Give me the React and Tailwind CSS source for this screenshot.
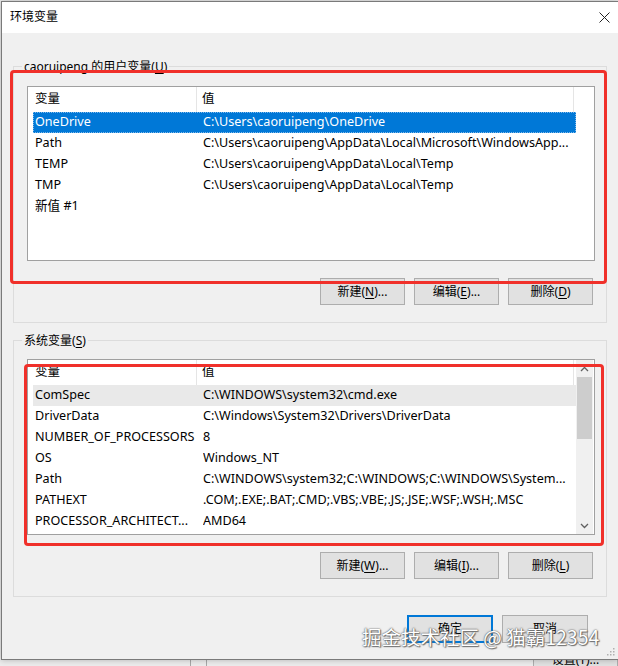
import React from 'react';

const userRows = [
  ['OneDrive', 'C:\\Users\\caoruipeng\\OneDrive'],
  ['Path', 'C:\\Users\\caoruipeng\\AppData\\Local\\Microsoft\\WindowsApp...'],
  ['TEMP', 'C:\\Users\\caoruipeng\\AppData\\Local\\Temp'],
  ['TMP', 'C:\\Users\\caoruipeng\\AppData\\Local\\Temp'],
  ['新值 #1', ''],
];

const sysRows = [
  ['ComSpec', 'C:\\WINDOWS\\system32\\cmd.exe'],
  ['DriverData', 'C:\\Windows\\System32\\Drivers\\DriverData'],
  ['NUMBER_OF_PROCESSORS', '8'],
  ['OS', 'Windows_NT'],
  ['Path', 'C:\\WINDOWS\\system32;C:\\WINDOWS;C:\\WINDOWS\\System...'],
  ['PATHEXT', '.COM;.EXE;.BAT;.CMD;.VBS;.VBE;.JS;.JSE;.WSF;.WSH;.MSC'],
  ['PROCESSOR_ARCHITECT...', 'AMD64'],
];

// 按钮（带助记键下划线）
function Btn({ label, hot, tail = '', primary = false, size = 'h-[27px] w-[85px]' }) {
  return (
    <div
      className={`${size} flex items-center justify-center bg-[#e1e1e1] text-[12px] text-black ${
        primary ? 'border-2 border-[#0078d7]' : 'border border-[#adadad]'
      }`}
    >
      {label}
      {hot && (
        <>
          (<span className="underline underline-offset-[2px]">{hot}</span>)
        </>
      )}
      {tail}
    </div>
  );
}

function Header() {
  return (
    <div className="flex h-[25px] items-center text-[12.5px] bg-white">
      <div className="w-[169px] h-full flex items-center pl-[7px] border-r border-[#e5e5e5]">变量</div>
      <div className="w-[377px] h-full flex items-center pl-[5px] border-r border-[#e5e5e5]">值</div>
    </div>
  );
}

function Row({ name, value, mode }) {
  const bg =
    mode === 'sel'
      ? 'bg-[#0078d7] text-white outline outline-1 outline-dotted outline-[#7fb9ea] -outline-offset-1'
      : mode === 'grey'
      ? 'bg-[#e9e9e9] text-black'
      : 'text-black';
  return (
    <div className={`ml-[5px] w-[543px] h-[21px] flex items-center text-[12.6px] ${bg}`}>
      <div className="w-[170px] pl-[2px] whitespace-nowrap overflow-hidden">{name}</div>
      <div className="flex-1 whitespace-nowrap overflow-hidden">{value}</div>
    </div>
  );
}

function Chevron({ up }) {
  return (
    <svg width="9" height="6" viewBox="0 0 9 6">
      <path
        d={up ? 'M1 5 L4.5 1.5 L8 5' : 'M1 1 L4.5 4.5 L8 1'}
        fill="none"
        stroke="#606060"
        strokeWidth="1.3"
      />
    </svg>
  );
}

function GroupBox({ label, hot, children }) {
  return (
    <div className="relative w-[594px] border border-[#dcdcdc] pl-[13px] pr-[11px]">
      <div className="absolute -top-[9px] left-[8px] px-[2px] bg-[#f0f0f0] text-[12px] text-black leading-[18px]">
        {label}(<span className="underline underline-offset-[2px]">{hot}</span>)
      </div>
      {children}
    </div>
  );
}

export default function App() {
  return (
    <div className="relative w-[618px] h-[666px] overflow-hidden bg-[#ececec] font-['Noto_Sans','Noto_Sans_CJK_SC',sans-serif] text-black">
      {/* 对话框 */}
      <div className="relative ml-[1px] mt-[1px] w-[617px] h-[659px] border-l border-t border-b border-[#7a7a7a] bg-[#f0f0f0] shadow-[0_0_6px_rgba(0,0,0,0.25)]">
        <div className="h-[31px] bg-white flex items-center justify-between pl-[8px] pr-[8px]">
          <span className="text-[12px] -mt-[2px]">环境变量</span>
          <svg width="11" height="11" viewBox="0 0 11 11">
            <path d="M0.5 0.5 L10.5 10.5 M10.5 0.5 L0.5 10.5" stroke="#222" strokeWidth="1" />
          </svg>
        </div>

        <div className="pl-[11px] pt-[33px]">
          <GroupBox label="caoruipeng 的用户变量" hot="U">
            <div className="mt-[19px] h-[175px] border border-[#a0a0a0] bg-white">
              <Header />
              {userRows.map((r, i) => (
                <Row key={r[0]} name={r[0]} value={r[1]} mode={i === 0 ? 'sel' : ''} />
              ))}
            </div>
            <div className="flex justify-end gap-[9px] mt-[17px] mb-[17px] pr-[2px]">
              <Btn label="新建" hot="N" tail="..." />
              <Btn label="编辑" hot="E" tail="..." />
              <Btn label="删除" hot="D" />
            </div>
          </GroupBox>

          <div className="mt-[17px]">
            <GroupBox label="系统变量" hot="S">
              <div className="mt-[18px] h-[176px] border border-[#a0a0a0] bg-white flex">
                <div className="flex-1">
                  <Header />
                  {sysRows.map((r, i) => (
                    <Row key={r[0] + i} name={r[0]} value={r[1]} mode={i === 0 ? 'grey' : ''} />
                  ))}
                </div>
                <div className="w-[17px] mr-[1px] bg-[#f0f0f0] flex flex-col items-center">
                  <div className="h-[17px] flex items-center justify-center">
                    <Chevron up />
                  </div>
                  <div className="w-[15px] h-[62px] bg-[#cdcdcd]" />
                  <div className="flex-1" />
                  <div className="h-[17px] flex items-center justify-center">
                    <Chevron />
                  </div>
                </div>
              </div>
              <div className="flex justify-end gap-[9px] mt-[17px] mb-[17px] pr-[2px]">
                <Btn label="新建" hot="W" tail="..." />
                <Btn label="编辑" hot="I" tail="..." />
                <Btn label="删除" hot="L" />
              </div>
            </GroupBox>
          </div>
        </div>

        <div className="flex justify-end gap-[9px] mt-[18px] pr-[30px]">
          <Btn label="确定" primary size="h-[28px] w-[86px]" />
          <Btn label="取消" size="h-[28px] w-[86px]" />
        </div>

        {/* 尺寸调整手柄 */}
        <svg className="absolute right-[3px] bottom-[3px]" width="10" height="10" viewBox="0 0 10 10">
          {[[8, 2], [8, 5], [5, 5], [8, 8], [5, 8], [2, 8]].map(([x, y]) => (
            <rect key={`${x}-${y}`} x={x} y={y} width="1.5" height="1.5" fill="#b0b0b0" />
          ))}
        </svg>
      </div>

      {/* 后面的窗口 */}
      <div className="h-[6px] flex overflow-hidden">
        <div className="ml-[190px] w-[17px] h-full border-l border-r border-[#a8a8a8]" />
        <div className="ml-auto w-[85px] h-[26px] -mt-[13px] flex items-center justify-center bg-[#e1e1e1] border border-[#adadad] text-[12px]">
          设置(T)...
        </div>
      </div>

      {/* 红色标注框 */}
      <div className="absolute left-[10px] top-[70px] w-[597px] h-[214px] border-[3px] border-[#f0302a] rounded-[4px]" />
      <div className="absolute left-[24px] top-[364px] w-[580px] h-[182px] border-[3px] border-[#f0302a] rounded-[4px]" />

      {/* 水印 */}
      <div className="absolute left-[362px] top-[623px] text-[19.5px] leading-[28px] text-white font-['Noto_Sans_CJK_SC',sans-serif] [text-shadow:0_0_1px_#555,0_0_2px_#666,1px_1px_1px_#777]">
        掘金技术社区 @ 猫霸12354
      </div>
    </div>
  );
}
